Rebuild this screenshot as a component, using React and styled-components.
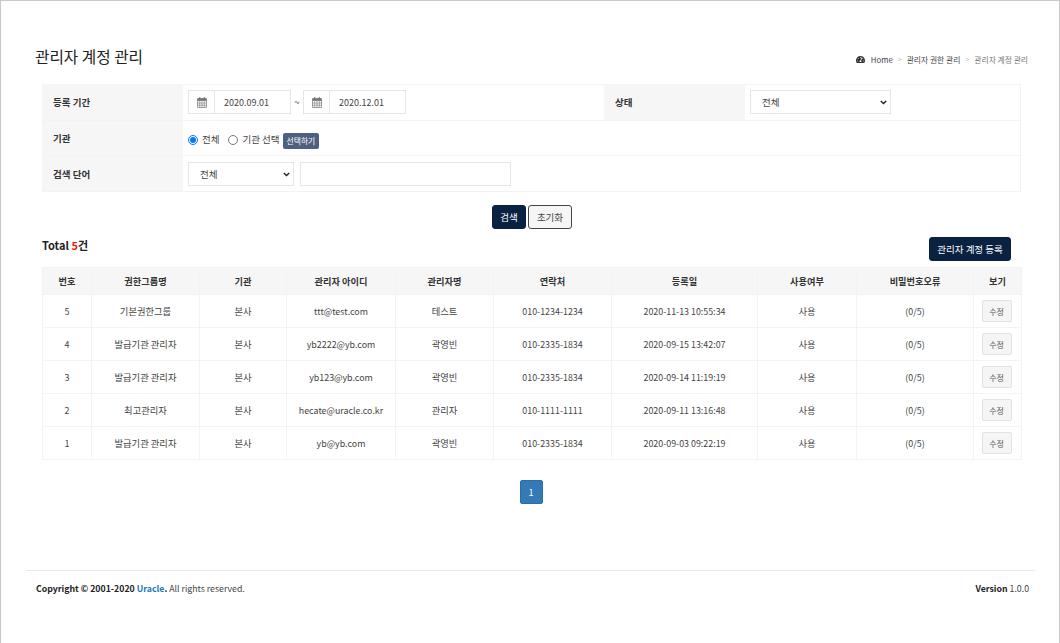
import React from "react";
import styled, { createGlobalStyle } from "styled-components";
import { FaTachometerAlt } from "react-icons/fa";

const rows = [
  { no: 5, group: "기본권한그룹", org: "본사", id: "ttt@test.com", name: "테스트", tel: "010-1234-1234", date: "2020-11-13 10:55:34" },
  { no: 4, group: "발급기관 관리자", org: "본사", id: "yb2222@yb.com", name: "곽영빈", tel: "010-2335-1834", date: "2020-09-15 13:42:07" },
  { no: 3, group: "발급기관 관리자", org: "본사", id: "yb123@yb.com", name: "곽영빈", tel: "010-2335-1834", date: "2020-09-14 11:19:19" },
  { no: 2, group: "최고관리자", org: "본사", id: "hecate@uracle.co.kr", name: "관리자", tel: "010-1111-1111", date: "2020-09-11 13:16:48" },
  { no: 1, group: "발급기관 관리자", org: "본사", id: "yb@yb.com", name: "곽영빈", tel: "010-2335-1834", date: "2020-09-03 09:22:19" },
];

const columns = [
  { title: "번호", width: 49 },
  { title: "권한그룹명", width: 108 },
  { title: "기관", width: 87 },
  { title: "관리자 아이디", width: 109 },
  { title: "관리자명", width: 98 },
  { title: "연락처", width: 118 },
  { title: "등록일", width: 146 },
  { title: "사용여부", width: 99 },
  { title: "비밀번호오류", width: 117 },
  { title: "보기", width: 48 },
];

function CalendarIcon() {
  return (
    <svg width="10" height="11" viewBox="0 0 10 11">
      <rect x="0.4" y="1.5" width="9.2" height="9.1" rx="0.6" fill="#fff" stroke="#777" strokeWidth="0.8" />
      <rect x="0.4" y="1.5" width="9.2" height="2.4" fill="#777" />
      <rect x="2.1" y="0" width="1.2" height="2.6" rx="0.5" fill="#777" />
      <rect x="6.7" y="0" width="1.2" height="2.6" rx="0.5" fill="#777" />
      <path d="M0.5 6h9M0.5 8.2h9M2.7 4v6.4M5 4v6.4M7.3 4v6.4" stroke="#777" strokeWidth="0.6" />
    </svg>
  );
}

function DateField({ value }) {
  return (
    <DateBox>
      <DateIcon>
        <CalendarIcon />
      </DateIcon>
      <DateValue>{value}</DateValue>
    </DateBox>
  );
}

function SelectField({ width }) {
  return (
    <SelectWrap $width={width}>
      <Select defaultValue="all">
        <option value="all">전체</option>
      </Select>
      <Chevron width="7" height="5" viewBox="0 0 7 5">
        <path d="M0.8 0.9 3.5 3.6 6.2 0.9" fill="none" stroke="#222" strokeWidth="1.4" />
      </Chevron>
    </SelectWrap>
  );
}

export default function App() {
  return (
    <Page>
      <GlobalStyle />
      <Header>
        <Title>관리자 계정 관리</Title>
        <Crumbs>
          <FaTachometerAlt />
          <CrumbLink>Home</CrumbLink>
          <CrumbSep>&gt;</CrumbSep>
          <CrumbLink>관리자 권한 관리</CrumbLink>
          <CrumbSep>&gt;</CrumbSep>
          <CrumbNow>관리자 계정 관리</CrumbNow>
        </Crumbs>
      </Header>

      <Filter>
        <FilterRow $height={37}>
          <FilterLabel>등록 기간</FilterLabel>
          <FilterCell $width={421}>
            <DateField value="2020.09.01" />
            <Tilde>~</Tilde>
            <DateField value="2020.12.01" />
          </FilterCell>
          <FilterLabel>상태</FilterLabel>
          <FilterCell $grow>
            <SelectField width={141} />
          </FilterCell>
        </FilterRow>
        <FilterRow $height={35}>
          <FilterLabel>기관</FilterLabel>
          <FilterCell $grow $shift={2}>
            <RadioLabel>
              <input type="radio" name="org" defaultChecked />
              전체
            </RadioLabel>
            <RadioLabel>
              <input type="radio" name="org" />
              기관 선택
            </RadioLabel>
            <PickButton>선택하기</PickButton>
          </FilterCell>
        </FilterRow>
        <FilterRow $height={35} $last>
          <FilterLabel>검색 단어</FilterLabel>
          <FilterCell $grow>
            <SelectField width={106} />
            <TextInput />
          </FilterCell>
        </FilterRow>
      </Filter>

      <SearchActions>
        <PrimaryButton>검색</PrimaryButton>
        <ResetButton>초기화</ResetButton>
      </SearchActions>

      <ListBar>
        <Total>
          Total <em>5</em>건
        </Total>
        <RegisterButton>관리자 계정 등록</RegisterButton>
      </ListBar>

      <Table>
        <colgroup>
          {columns.map((col) => (
            <col key={col.title} width={col.width} />
          ))}
        </colgroup>
        <thead>
          <tr>
            {columns.map((col) => (
              <th key={col.title}>{col.title}</th>
            ))}
          </tr>
        </thead>
        <tbody>
          {rows.map((row) => (
            <tr key={row.no}>
              <td>{row.no}</td>
              <KoCell>{row.group}</KoCell>
              <KoCell>{row.org}</KoCell>
              <td>{row.id}</td>
              <KoCell>{row.name}</KoCell>
              <td>{row.tel}</td>
              <td>{row.date}</td>
              <KoCell>사용</KoCell>
              <td>(0/5)</td>
              <td>
                <EditButton>수정</EditButton>
              </td>
            </tr>
          ))}
        </tbody>
      </Table>

      <Pager>
        <PageButton>1</PageButton>
      </Pager>

      <Footer>
        <Copy>
          <b>
            Copyright © 2001-2020 <UracleLink>Uracle</UracleLink>.
          </b>{" "}
          All rights reserved.
        </Copy>
        <Copy>
          <b>Version</b> 1.0.0
        </Copy>
      </Footer>
    </Page>
  );
}

const GlobalStyle = createGlobalStyle`
  html, body {
    margin: 0;
    padding: 0;
    background: #fff;
  }
  body {
    font-family: "Noto Sans CJK KR", "Noto Sans", sans-serif;
    color: #333;
    font-size: 10px;
  }
  * {
    box-sizing: border-box;
  }
`;

const Page = styled.div`
  width: 1060px;
  height: 643px;
  border: 1px solid #c9c9c9;
  border-bottom: none;
  overflow: hidden;
`;

const Header = styled.div`
  display: flex;
  justify-content: space-between;
  align-items: center;
  height: 83px;
  padding: 50px 31px 22px 34px;
`;

const Title = styled.h1`
  margin: 0;
  font-size: 15.7px;
  font-weight: 400;
  color: #222;
  line-height: 1;
`;

const Crumbs = styled.div`
  display: flex;
  align-items: center;
  gap: 5px;
  margin-top: 5px;
  font-size: 7.8px;
  color: #333;
  svg {
    font-size: 9px;
    margin-right: 1px;
  }
`;

const CrumbLink = styled.span`
  color: #444;
`;

const CrumbSep = styled.span`
  color: #bbb;
  font-size: 7px;
`;

const CrumbNow = styled.span`
  color: #777;
`;

const Filter = styled.div`
  width: 979px;
  margin-left: 41px;
  border-right: 1px solid #f3f3f3;
  border-bottom: 1px solid #f3f3f3;
  box-shadow: inset 0 1px 0 #f3f3f3;
`;

const FilterRow = styled.div`
  display: flex;
  height: ${(p) => p.$height}px;
  border-bottom: ${(p) => (p.$last ? "none" : "1px solid #f3f3f3")};
`;

const FilterLabel = styled.div`
  display: flex;
  align-items: center;
  width: 141px;
  padding-left: 11px;
  background: #f6f6f6;
  font-size: 9.5px;
  font-weight: 700;
  color: #333;
`;

const FilterCell = styled.div`
  display: flex;
  align-items: center;
  padding: ${(p) => p.$shift || 0}px 0 0 5px;
  width: ${(p) => (p.$width ? `${p.$width}px` : "auto")};
  flex: ${(p) => (p.$grow ? 1 : "none")};
  font-size: 9.5px;
`;

const DateBox = styled.div`
  display: flex;
  height: 24px;
  border: 1px solid #e4e6ec;
`;

const DateIcon = styled.span`
  display: flex;
  align-items: center;
  justify-content: center;
  width: 26px;
  border-right: 1px solid #e4e6ec;
`;

const DateValue = styled.span`
  display: flex;
  align-items: center;
  width: 75px;
  padding-left: 9px;
  font-size: 9px;
  color: #444;
`;

const Tilde = styled.span`
  width: 12px;
  text-align: center;
  color: #555;
`;

const SelectWrap = styled.div`
  position: relative;
  width: ${(p) => p.$width}px;
  height: 24px;
`;

const Select = styled.select`
  width: 100%;
  height: 100%;
  padding-left: 11px;
  border: 1px solid #e4e6ec;
  border-radius: 0;
  appearance: none;
  background: #fff;
  font-family: inherit;
  font-size: 9.5px;
  color: #444;
`;

const Chevron = styled.svg`
  position: absolute;
  top: 10px;
  right: 4px;
  pointer-events: none;
`;

const TextInput = styled.input`
  width: 211px;
  height: 24px;
  margin-left: 6px;
  border: 1px solid #e4e6ec;
`;

const RadioLabel = styled.label`
  display: flex;
  align-items: center;
  margin-right: 9px;
  color: #444;
  input {
    width: 10px;
    height: 10px;
    margin: 1px 4px 0 0;
  }
`;

const PickButton = styled.button`
  height: 16px;
  margin: 3px 0 0 -6px;
  padding: 0 4px;
  border: none;
  border-radius: 2px;
  background: #4e6080;
  color: #fff;
  font-family: inherit;
  font-size: 7.8px;
`;

const SearchActions = styled.div`
  display: flex;
  justify-content: center;
  gap: 2px;
  padding: 13px 0 0 4px;
`;

const PrimaryButton = styled.button`
  width: 34px;
  height: 24px;
  padding: 0;
  border: 1px solid #0a2242;
  border-radius: 3px;
  background: #0a2242;
  color: #fff;
  font-family: inherit;
  font-size: 9.5px;
`;

const ResetButton = styled(PrimaryButton)`
  width: 44px;
  border-color: #444;
  background: #f5f5f5;
  color: #444;
`;

const ListBar = styled.div`
  display: flex;
  justify-content: space-between;
  align-items: flex-start;
  width: 969px;
  height: 30px;
  margin: 8px 0 0 41px;
`;

const Total = styled.div`
  margin-top: 0;
  font-size: 11px;
  font-weight: 700;
  color: #222;
  em {
    font-style: normal;
    color: #e8200c;
  }
`;

const RegisterButton = styled(PrimaryButton)`
  width: 82px;
  height: 24px;
  font-size: 9.5px;
`;

const Table = styled.table`
  width: 979px;
  margin-left: 41px;
  table-layout: fixed;
  border-collapse: collapse;
  th,
  td {
    padding: 0;
    border: 1px solid #f3f3f3;
    text-align: center;
    font-size: 8.9px;
  }
  th {
    height: 27px;
    background: #f6f6f6;
    font-size: 9.2px;
    font-weight: 700;
    color: #333;
  }
  td {
    height: 33px;
    color: #444;
  }
`;

const KoCell = styled.td`
  && {
    font-size: 9.3px;
  }
`;

const EditButton = styled.button`
  width: 30px;
  height: 22px;
  margin-right: 2px;
  padding: 0;
  border: 1px solid #e2e2e2;
  border-radius: 2px;
  background: #f5f5f5;
  color: #555;
  font-family: inherit;
  font-size: 8px;
`;

const Pager = styled.div`
  display: flex;
  justify-content: center;
  padding: 20px 0 0 2px;
`;

const PageButton = styled.button`
  width: 23px;
  height: 24px;
  border: 1px solid #2e6da4;
  border-radius: 2px;
  background: #337ab7;
  color: #fff;
  font-family: inherit;
  font-size: 9px;
`;

const Footer = styled.div`
  display: flex;
  justify-content: space-between;
  align-items: center;
  width: 1009px;
  height: 36px;
  margin: 66px 0 0 25px;
  padding: 0 6px 0 10px;
  border-top: 1px solid #e8e8ee;
`;

const Copy = styled.div`
  font-size: 8.75px;
  color: #444;
  b {
    color: #222;
  }
`;

const UracleLink = styled.span`
  color: #1b78b8;
`;
